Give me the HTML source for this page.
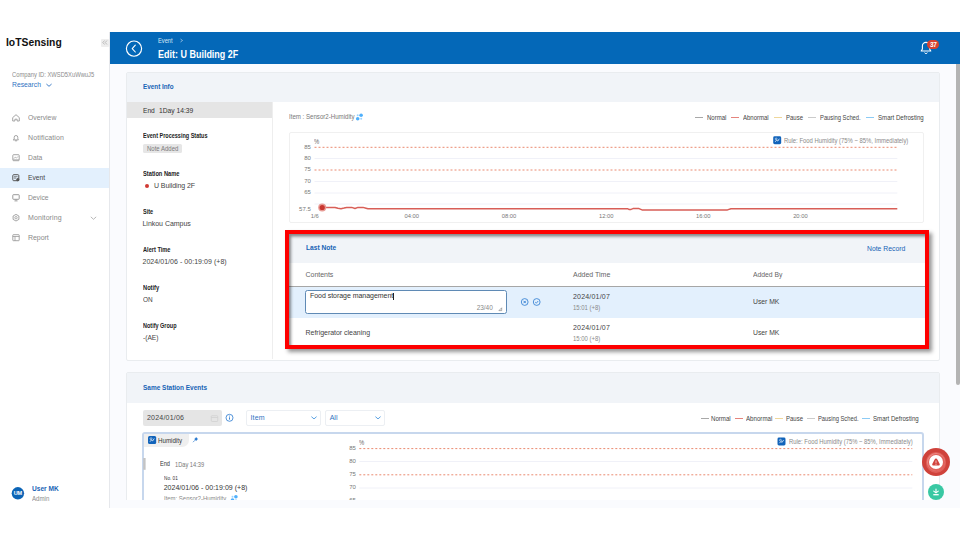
<!DOCTYPE html>
<html lang="en">
<head>
<meta charset="utf-8">
<title>IoTSensing - Edit: U Building 2F</title>
<style>
html,body{margin:0;padding:0;background:#fff;}
body{width:960px;height:540px;position:relative;overflow:hidden;font-family:"Liberation Sans",sans-serif;}
.b{position:absolute;display:block;}
.t{position:absolute;white-space:nowrap;display:block;transform-origin:0 50%;}
</style>
</head>
<body>
<div class="b" style="left:110px;top:64px;width:850px;height:443.5px;background:#fafbfe"></div>
<div class="b" style="left:109.3px;top:32px;width:0.9px;height:475.5px;background:#e6e8ec"></div>
<div class="b" style="left:110px;top:32px;width:850px;height:32px;background:#0468b8"></div>
<div class="b" style="left:955.6px;top:64px;width:4.4px;height:321px;background:#b4b4b4;border-radius:0 0 2px 2px"></div>
<span class="t" style="left:6px;top:34px;font-size:11px;line-height:16px;color:#111;font-weight:700;transform:scaleX(0.9396);">IoTSensing</span>
<div class="b" style="left:101px;top:38.5px;width:7.5px;height:8px;background:#eeeeee;border-radius:1px"></div>
<svg class="b" style="left:102px;top:40px" width="6" height="5" viewBox="0 0 6 5"><g transform="translate(0 0)"><path d="M2.6 .5 L.8 2.5 L2.6 4.5 M5 .5 L3.2 2.5 L5 4.5" fill="none" stroke="#9a9a9a" stroke-width=".6"/></g></svg>
<span class="t" style="left:12px;top:70px;font-size:6.5px;line-height:10px;color:#8c8c8c;transform:scaleX(0.8924);">Company ID: XWSD5XuWwuJ5</span>
<span class="t" style="left:12px;top:80px;font-size:7px;line-height:10px;color:#2f73c2;transform:scaleX(0.968);">Research</span>
<svg class="b" style="left:46px;top:83px" width="6" height="5" viewBox="0 0 6 5"><g transform="translate(0 0.4)"><path d="M.7 .9 L3 2.9 L5.3 .9" fill="none" stroke="#2f73c2" stroke-width=".9" stroke-linecap="round"/></g></svg>
<div class="b" style="left:0px;top:168px;width:109.3px;height:19.6px;background:#e3f0fd"></div>
<span class="t" style="left:28px;top:113px;font-size:7px;line-height:10px;color:#8a8a8a;transform:scaleX(0.9701);">Overview</span>
<svg class="b" style="left:12px;top:113px" width="8" height="9" viewBox="0 0 8 9"><g transform="translate(0 0.7)"><path d="M.7 7.3 V3.9 L4 1 L7.3 3.9 V7.3 H5.1 V5.5 H2.9 V7.3 Z" fill="none" stroke="#8f8f8f" stroke-width=".8" stroke-linejoin="round"/></g></svg>
<span class="t" style="left:28px;top:133px;font-size:7px;line-height:10px;color:#8a8a8a;letter-spacing:0.114px;">Notification</span>
<svg class="b" style="left:12px;top:133px" width="8" height="9" viewBox="0 0 8 9"><g transform="translate(0 0.7)"><path d="M1.6 6.2 H6.4 L5.8 5.2 V3.6 A1.8 1.8 0 0 0 2.2 3.6 V5.2 Z M3.3 7.1 H4.7" fill="none" stroke="#8f8f8f" stroke-width=".8" stroke-linejoin="round" stroke-linecap="round"/></g></svg>
<span class="t" style="left:28px;top:153px;font-size:7px;line-height:10px;color:#8a8a8a;transform:scaleX(0.9671);">Data</span>
<svg class="b" style="left:12px;top:153px" width="8" height="9" viewBox="0 0 8 9"><g transform="translate(0 0.7)"><rect x=".8" y="1" width="6.4" height="6" rx=".8" fill="none" stroke="#8f8f8f" stroke-width=".8"/><path d="M1.8 5 L3.2 3.4 L4.4 4.4 L6.2 2.6 M1 6 H7" fill="none" stroke="#8f8f8f" stroke-width=".6"/></g></svg>
<span class="t" style="left:28px;top:173px;font-size:7px;line-height:10px;color:#444;transform:scaleX(0.9497);">Event</span>
<svg class="b" style="left:12px;top:173px" width="8" height="9" viewBox="0 0 8 9"><g transform="translate(0 0.7)"><rect x=".8" y="1" width="6" height="6" rx=".9" fill="none" stroke="#555" stroke-width="1"/><path d="M2 3 H5.6 M2 4.4 H4" stroke="#555" stroke-width=".7"/><circle cx="5.8" cy="6" r="1.6" fill="#555"/></g></svg>
<span class="t" style="left:28px;top:193px;font-size:7px;line-height:10px;color:#8a8a8a;transform:scaleX(0.9628);">Device</span>
<svg class="b" style="left:12px;top:193px" width="8" height="9" viewBox="0 0 8 9"><g transform="translate(0 0.7)"><rect x=".8" y="1" width="6.4" height="4.6" rx=".6" fill="none" stroke="#8f8f8f" stroke-width=".9"/><path d="M2.4 7.2 H5.6 M4 5.8 V7" stroke="#8f8f8f" stroke-width=".8"/></g></svg>
<span class="t" style="left:28px;top:213px;font-size:7px;line-height:10px;color:#8a8a8a;letter-spacing:0.102px;">Monitoring</span>
<svg class="b" style="left:12px;top:213px" width="8" height="9" viewBox="0 0 8 9"><g transform="translate(0 0.7)"><path d="M4 .7 L6.9 2.3 V5.7 L4 7.3 L1.1 5.7 V2.3 Z" fill="none" stroke="#8f8f8f" stroke-width=".8" stroke-linejoin="round"/><circle cx="4" cy="4" r="1.2" fill="none" stroke="#8f8f8f" stroke-width=".7"/></g></svg>
<span class="t" style="left:28px;top:233px;font-size:7px;line-height:10px;color:#8a8a8a;letter-spacing:-0.052px;">Report</span>
<svg class="b" style="left:12px;top:233px" width="8" height="9" viewBox="0 0 8 9"><g transform="translate(0 0.7)"><rect x=".8" y="1" width="6.4" height="6" rx=".6" fill="none" stroke="#8f8f8f" stroke-width=".8"/><path d="M.8 2.8 H7.2 M3 2.8 V7" stroke="#8f8f8f" stroke-width=".7"/></g></svg>
<svg class="b" style="left:90px;top:216px" width="7" height="5" viewBox="0 0 7 5"><g transform="translate(0.5 0.3)"><path d="M.6 .8 L3 3 L5.4 .8" fill="none" stroke="#9a9a9a" stroke-width=".7" stroke-linecap="round"/></g></svg>
<svg class="b" style="left:11px;top:486px" width="14" height="14" viewBox="0 0 14 14"><g transform="translate(0 0)"><circle cx="6.9" cy="7.3" r="6.2" fill="#0b64b6"/></g></svg>
<span class="t" style="left:13.7px;top:489px;font-size:5.5px;line-height:8px;color:#fff;font-weight:700;letter-spacing:-0.077px;">UM</span>
<span class="t" style="left:32px;top:484px;font-size:7px;line-height:10px;color:#1763b5;font-weight:700;transform:scaleX(0.9402);">User MK</span>
<span class="t" style="left:32px;top:494px;font-size:6.5px;line-height:10px;color:#8c8c8c;transform:scaleX(0.939);">Admin</span>
<svg class="b" style="left:125px;top:39px" width="18" height="19" viewBox="0 0 18 19"><g transform="translate(0 0.6)"><circle cx="9" cy="9" r="7.6" fill="none" stroke="#fff" stroke-width="1.15"/><path d="M10.3 5.6 L7.2 9 L10.3 12.4" fill="none" stroke="#fff" stroke-width="1.1" stroke-linecap="round" stroke-linejoin="round"/></g></svg>
<span class="t" style="left:158px;top:36px;font-size:6.5px;line-height:10px;color:#d7e6f5;transform:scaleX(0.8784);">Event</span>
<svg class="b" style="left:179px;top:38px" width="5" height="5" viewBox="0 0 5 5"><g transform="translate(0.5 0.5)"><path d="M1 .5 L3 2 L1 3.5" fill="none" stroke="#d7e6f5" stroke-width=".6"/></g></svg>
<span class="t" style="left:158px;top:48px;font-size:10px;line-height:14px;color:#fff;font-weight:700;transform:scaleX(0.8978);">Edit: U Building 2F</span>
<svg class="b" style="left:919px;top:40px" width="14" height="15" viewBox="0 0 14 15"><g transform="translate(0 0)"><path d="M2.2 11 H11.8 L10.6 9 V6 A3.6 3.6 0 0 0 3.4 6 V9 Z" fill="none" stroke="#fff" stroke-width="1.1" stroke-linejoin="round"/><path d="M5.6 12.6 A1.5 1.5 0 0 0 8.4 12.6" fill="none" stroke="#fff" stroke-width="1"/></g></svg>
<div class="b" style="left:927.2px;top:40px;width:12px;height:8.9px;background:#d8412f;border-radius:4.4px"></div>
<span class="t" style="left:929.88px;top:40px;font-size:6.5px;line-height:10px;color:#fff;font-weight:700;letter-spacing:-0.3px;">37</span>
<div class="b" style="left:126px;top:72px;width:814px;height:288.5px;background:#fff;border:1px solid #e9ecef;border-radius:2px;box-sizing:border-box"></div>
<div class="b" style="left:127px;top:72.8px;width:811.6px;height:29.2px;background:#f1f4f8"></div>
<span class="t" style="left:142.7px;top:82px;font-size:7px;line-height:10px;color:#1763b5;font-weight:700;transform:scaleX(0.9044);">Event Info</span>
<div class="b" style="left:127px;top:102px;width:145.5px;height:16px;background:#e5e5e5"></div>
<div class="b" style="left:272.2px;top:102px;width:0.8px;height:257.4px;background:#eeeeee"></div>
<span class="t" style="left:142.5px;top:106px;font-size:7px;line-height:10px;color:#333;transform:scaleX(0.9474);">End</span>
<span class="t" style="left:158.7px;top:106px;font-size:7px;line-height:10px;color:#333;transform:scaleX(0.958);">1Day 14:39</span>
<span class="t" style="left:142.5px;top:131px;font-size:6.5px;line-height:10px;color:#222;font-weight:700;transform:scaleX(0.8462);">Event Processing Status</span>
<div class="b" style="left:142.5px;top:143.8px;width:39.5px;height:9.4px;background:#e6e6e6;border-radius:1.5px"></div>
<span class="t" style="left:146.7px;top:144px;font-size:6.5px;line-height:10px;color:#7a7a7a;transform:scaleX(0.9213);">Note Added</span>
<span class="t" style="left:142.5px;top:169px;font-size:6.5px;line-height:10px;color:#222;font-weight:700;transform:scaleX(0.8787);">Station Name</span>
<div class="b" style="left:145px;top:183.5px;width:4px;height:4px;background:#d03a34;border-radius:50%"></div>
<span class="t" style="left:154px;top:181px;font-size:7px;line-height:10px;color:#444;letter-spacing:-0.079px;">U Building 2F</span>
<span class="t" style="left:142.5px;top:207px;font-size:6.5px;line-height:10px;color:#222;font-weight:700;transform:scaleX(0.8556);">Site</span>
<span class="t" style="left:142.5px;top:219px;font-size:7px;line-height:10px;color:#444;letter-spacing:-0.026px;">Linkou Campus</span>
<span class="t" style="left:142.5px;top:245px;font-size:6.5px;line-height:10px;color:#222;font-weight:700;transform:scaleX(0.8683);">Alert Time</span>
<span class="t" style="left:142.5px;top:257px;font-size:7px;line-height:10px;color:#444;letter-spacing:0.043px;">2024/01/06 - 00:19:09 (+8)</span>
<span class="t" style="left:142.5px;top:283px;font-size:6.5px;line-height:10px;color:#222;font-weight:700;transform:scaleX(0.8797);">Notify</span>
<span class="t" style="left:142.5px;top:295px;font-size:7px;line-height:10px;color:#444;transform:scaleX(0.9238);">ON</span>
<span class="t" style="left:142.5px;top:321px;font-size:6.5px;line-height:10px;color:#222;font-weight:700;transform:scaleX(0.8434);">Notify Group</span>
<span class="t" style="left:142.5px;top:333px;font-size:7px;line-height:10px;color:#444;transform:scaleX(0.9491);">-(AE)</span>
<span class="t" style="left:289px;top:112px;font-size:6.5px;line-height:10px;color:#777;transform:scaleX(0.9395);">Item : Sensor2-Humidity</span>
<svg class="b" style="left:355px;top:113px" width="9" height="8" viewBox="0 0 9 8"><g transform="translate(0.6 0.2)"><circle cx="2.1" cy="5.5" r="1.8" fill="#4fb0fc"/><circle cx="5.5" cy="2.1" r="1.8" fill="#4fb0fc"/><circle cx="2.1" cy="2.1" r="1" fill="#9fd3fd"/><circle cx="5.6" cy="5.6" r="1" fill="#9fd3fd"/></g></svg>
<div class="b" style="left:695px;top:116.89999999999999px;width:7.5px;height:1px;background:#a8a8a8"></div>
<span class="t" style="left:706.7px;top:113px;font-size:6.5px;line-height:10px;color:#444;transform:scaleX(0.9213);">Normal</span>
<div class="b" style="left:731.3px;top:116.89999999999999px;width:7.5px;height:1px;background:#e5847d"></div>
<span class="t" style="left:743.3px;top:113px;font-size:6.5px;line-height:10px;color:#444;transform:scaleX(0.9238);">Abnormal</span>
<div class="b" style="left:774.3px;top:116.89999999999999px;width:7.5px;height:1px;background:#efd79b"></div>
<span class="t" style="left:786px;top:113px;font-size:6.5px;line-height:10px;color:#444;transform:scaleX(0.9224);">Pause</span>
<div class="b" style="left:808.3px;top:116.89999999999999px;width:7.5px;height:1px;background:#cbcbcb"></div>
<span class="t" style="left:820px;top:113px;font-size:6.5px;line-height:10px;color:#444;transform:scaleX(0.8939);">Pausing Sched.</span>
<div class="b" style="left:866.3px;top:116.89999999999999px;width:7.5px;height:1px;background:#8ccbf5"></div>
<span class="t" style="left:878px;top:113px;font-size:6.5px;line-height:10px;color:#444;transform:scaleX(0.9371);">Smart Defrosting</span>
<div class="b" style="left:289px;top:132px;width:635.2px;height:91px;background:#fff;border:1px solid #f0f0f0;border-radius:2px;box-sizing:border-box"></div>
<svg class="b" style="left:289px;top:132px" width="635" height="91" viewBox="0 0 635 91"><g transform="translate(-289 -132)"><path d="M314.5 158.5 H897.3" stroke="#eceef6" stroke-width=".8"/><path d="M314.5 181.5 H897.3" stroke="#eceef6" stroke-width=".8"/><path d="M314.5 193 H897.3" stroke="#eceef6" stroke-width=".8"/><path d="M314.5 204 H897.3" stroke="#eceef6" stroke-width=".8"/><path d="M314.5 147.3 H897.3" stroke="#ea8a70" stroke-width="1" stroke-dasharray="2 2"/><path d="M314.5 170 H897.3" stroke="#ea8a70" stroke-width="1" stroke-dasharray="2 2"/><path d="M322.2 207.5 L335 207.5 L338 208.2 L341 208.7 L344 208.1 L346.7 207.4 L351.7 207.4 L355 208.5 L358 207.4 L363 207.4 L366 208.2 L368 208.7 L627.5 208.7 L629.3 209.6 L631 209.4 L633 208.6 L639 208.6 L642 209.9 L727.5 209.9 L731 208.7 L897.3 208.7" fill="none" stroke="#d85e57" stroke-width="1.5" stroke-linejoin="round"/><circle cx="322.2" cy="207.5" r="4" fill="#e79a94"/><circle cx="322.2" cy="207.5" r="2.6" fill="#c8352e"/></g></svg>
<span class="t" style="left:314.4px;top:137px;font-size:6.5px;line-height:10px;color:#6a6a6a;transform:scaleX(0.8997);">%</span>
<span class="t" style="left:304.13px;top:143px;font-size:6px;line-height:9px;color:#777;">85</span>
<span class="t" style="left:304.13px;top:154px;font-size:6px;line-height:9px;color:#777;">80</span>
<span class="t" style="left:304.13px;top:165px;font-size:6px;line-height:9px;color:#777;">75</span>
<span class="t" style="left:304.13px;top:177px;font-size:6px;line-height:9px;color:#777;">70</span>
<span class="t" style="left:304.13px;top:188px;font-size:6px;line-height:9px;color:#777;">65</span>
<span class="t" style="left:299.12px;top:205px;font-size:6px;line-height:9px;color:#777;">57.5</span>
<span class="t" style="left:310.77px;top:212px;font-size:5.8px;line-height:9px;color:#777;">1/6</span>
<span class="t" style="left:404.44px;top:212px;font-size:5.8px;line-height:9px;color:#777;">04:00</span>
<span class="t" style="left:501.74px;top:212px;font-size:5.8px;line-height:9px;color:#777;">08:00</span>
<span class="t" style="left:598.94px;top:212px;font-size:5.8px;line-height:9px;color:#777;">12:00</span>
<span class="t" style="left:696.04px;top:212px;font-size:5.8px;line-height:9px;color:#777;">16:00</span>
<span class="t" style="left:793.14px;top:212px;font-size:5.8px;line-height:9px;color:#777;">20:00</span>
<svg class="b" style="left:773px;top:136px" width="9" height="9" viewBox="0 0 9 9"><g transform="translate(0 0) scale(1.05 1.05)"><rect x=".2" y=".2" width="7.6" height="7.6" rx="1.4" fill="#1163ba"/><path d="M2 5.6 L3.4 4 L4.6 4.8 L6 2.6" fill="none" stroke="#fff" stroke-width=".7"/><circle cx="3" cy="2.8" r=".9" fill="none" stroke="#fff" stroke-width=".5"/></g></svg>
<span class="t" style="left:784px;top:136px;font-size:6.5px;line-height:10px;color:#8a8a8a;transform:scaleX(0.9066);">Rule: Food Humidity (75% ~ 85%, Immediately)</span>
<div class="b" style="left:285px;top:230px;width:644px;height:119px;border:4px solid #fe0000;box-sizing:border-box;box-shadow:2.5px 2.5px 4px rgba(0,0,0,.42);background:#fff"></div>
<div class="b" style="left:289px;top:234px;width:636px;height:29px;background:#f1f4f8"></div>
<div class="b" style="left:289px;top:286px;width:636px;height:1px;background:#a6a6a6"></div>
<div class="b" style="left:289px;top:287px;width:636px;height:30.6px;background:#e3f0fd"></div>
<div class="b" style="left:289px;top:234px;width:636px;height:111px;box-shadow:inset 2px 2.5px 3px rgba(0,0,0,.45)"></div>
<span class="t" style="left:305.5px;top:243px;font-size:7px;line-height:10px;color:#1763b5;font-weight:700;transform:scaleX(0.9469);">Last Note</span>
<span class="t" style="left:866.7px;top:244px;font-size:7px;line-height:10px;color:#1763b5;transform:scaleX(0.9746);">Note Record</span>
<span class="t" style="left:305.5px;top:270px;font-size:7px;line-height:10px;color:#666;letter-spacing:-0.027px;">Contents</span>
<span class="t" style="left:573px;top:270px;font-size:7px;line-height:10px;color:#666;letter-spacing:-0.006px;">Added Time</span>
<span class="t" style="left:752.8px;top:270px;font-size:7px;line-height:10px;color:#666;transform:scaleX(0.9685);">Added By</span>
<div class="b" style="left:305.3px;top:290.3px;width:201.7px;height:23.6px;background:#fff;border:1px solid #5f8ab5;border-radius:2.5px;box-sizing:border-box"></div>
<span class="t" style="left:310px;top:291px;font-size:7px;line-height:10px;color:#333;letter-spacing:-0.037px;">Food storage management</span>
<div class="b" style="left:393.2px;top:292.6px;width:0.7px;height:7px;background:#222"></div>
<span class="t" style="left:476.7px;top:303px;font-size:6.5px;line-height:10px;color:#8a8a8a;letter-spacing:-0.053px;">23/40</span>
<svg class="b" style="left:498px;top:307px" width="5" height="5" viewBox="0 0 5 5"><g transform="translate(0.3 0.2)"><path d="M.6 3.4 L3.4 .6 V3.4 Z" fill="none" stroke="#777" stroke-width=".6"/></g></svg>
<svg class="b" style="left:520px;top:297px" width="10" height="10" viewBox="0 0 10 10"><g transform="translate(0.2 0.5)"><circle cx="4.5" cy="4.5" r="3.4" fill="none" stroke="#2a7ad0" stroke-width=".8"/><path d="M3.3 3.3 L5.7 5.7 M5.7 3.3 L3.3 5.7" stroke="#2a7ad0" stroke-width=".9"/></g></svg>
<svg class="b" style="left:532px;top:297px" width="10" height="10" viewBox="0 0 10 10"><g transform="translate(0.2 0.5)"><circle cx="4.5" cy="4.5" r="3.4" fill="none" stroke="#2a7ad0" stroke-width=".8"/><path d="M3 4.6 L4.1 5.7 L6 3.5" fill="none" stroke="#2a7ad0" stroke-width=".8"/></g></svg>
<span class="t" style="left:573px;top:292px;font-size:7px;line-height:10px;color:#444;letter-spacing:0.196px;">2024/01/07</span>
<span class="t" style="left:573px;top:303px;font-size:6.5px;line-height:10px;color:#8a8a8a;transform:scaleX(0.9157);">15:01 (+8)</span>
<span class="t" style="left:752.8px;top:297px;font-size:7px;line-height:10px;color:#444;transform:scaleX(0.9697);">User MK</span>
<span class="t" style="left:305.5px;top:328px;font-size:7px;line-height:10px;color:#444;letter-spacing:-0.023px;">Refrigerator cleaning</span>
<span class="t" style="left:573px;top:323px;font-size:7px;line-height:10px;color:#444;letter-spacing:0.196px;">2024/01/07</span>
<span class="t" style="left:573px;top:334px;font-size:6.5px;line-height:10px;color:#8a8a8a;transform:scaleX(0.9157);">15:00 (+8)</span>
<span class="t" style="left:752.8px;top:328px;font-size:7px;line-height:10px;color:#444;transform:scaleX(0.9697);">User MK</span>
<div class="b" style="left:110px;top:370px;width:840px;height:129.8px;overflow:hidden"><div class="b" style="left:-110px;top:-370px;width:960px;height:540px">
<div class="b" style="left:126px;top:372px;width:814px;height:200px;background:#fff;border:1px solid #e9ecef;border-radius:2px;box-sizing:border-box"></div>
<div class="b" style="left:127px;top:373px;width:812px;height:29.7px;background:#f1f4f8"></div>
<span class="t" style="left:142.5px;top:383px;font-size:7px;line-height:10px;color:#1763b5;font-weight:700;transform:scaleX(0.9242);">Same Station Events</span>
<div class="b" style="left:142.7px;top:410.2px;width:79.5px;height:15.6px;background:#e5e5e5;border-radius:2px"></div>
<span class="t" style="left:147px;top:413px;font-size:7px;line-height:10px;color:#444;letter-spacing:0.216px;">2024/01/06</span>
<svg class="b" style="left:210px;top:414px" width="9" height="9" viewBox="0 0 9 9"><g transform="translate(0.5 0.5)"><rect x=".8" y="1.2" width="6.4" height="5.8" rx=".8" fill="none" stroke="#cfcfcf" stroke-width=".7"/><path d="M.8 3 H7.2" stroke="#cfcfcf" stroke-width=".7"/></g></svg>
<svg class="b" style="left:225px;top:413px" width="9" height="10" viewBox="0 0 9 10"><g transform="translate(0 0.3)"><circle cx="4.5" cy="4.5" r="3.5" fill="none" stroke="#2a7ad0" stroke-width=".8"/><path d="M4.5 4 V6.3" stroke="#2a7ad0" stroke-width=".9"/><circle cx="4.5" cy="2.8" r=".5" fill="#2a7ad0"/></g></svg>
<div class="b" style="left:246.3px;top:410.3px;width:74.5px;height:15.5px;background:#fff;border:1px solid #eceff3;border-radius:2px;box-sizing:border-box"></div>
<span class="t" style="left:250.5px;top:413px;font-size:7px;line-height:10px;color:#2f73c2;letter-spacing:0.146px;">Item</span>
<svg class="b" style="left:311px;top:416px" width="6" height="4" viewBox="0 0 6 4"><g transform="translate(0 0)"><path d="M.7 .9 L3 2.9 L5.3 .9" fill="none" stroke="#4a97e0" stroke-width=".9" stroke-linecap="round"/></g></svg>
<div class="b" style="left:325.3px;top:410.3px;width:59.4px;height:15.5px;background:#fff;border:1px solid #eceff3;border-radius:2px;box-sizing:border-box"></div>
<span class="t" style="left:329.7px;top:413px;font-size:7px;line-height:10px;color:#2f73c2;letter-spacing:0.007px;">All</span>
<svg class="b" style="left:375px;top:416px" width="6" height="4" viewBox="0 0 6 4"><g transform="translate(0 0)"><path d="M.7 .9 L3 2.9 L5.3 .9" fill="none" stroke="#4a97e0" stroke-width=".9" stroke-linecap="round"/></g></svg>
<div class="b" style="left:701px;top:418px;width:7.5px;height:1px;background:#a8a8a8"></div>
<span class="t" style="left:711.3px;top:414px;font-size:6.5px;line-height:10px;color:#444;transform:scaleX(0.9404);">Normal</span>
<div class="b" style="left:735.3px;top:418px;width:7.5px;height:1px;background:#e5847d"></div>
<span class="t" style="left:745.7px;top:414px;font-size:6.5px;line-height:10px;color:#444;transform:scaleX(0.9454);">Abnormal</span>
<div class="b" style="left:775.3px;top:418px;width:7.5px;height:1px;background:#efd79b"></div>
<span class="t" style="left:786px;top:414px;font-size:6.5px;line-height:10px;color:#444;transform:scaleX(0.9224);">Pause</span>
<div class="b" style="left:807.3px;top:418px;width:7.5px;height:1px;background:#cbcbcb"></div>
<span class="t" style="left:817.5px;top:414px;font-size:6.5px;line-height:10px;color:#444;transform:scaleX(0.8895);">Pausing Sched.</span>
<div class="b" style="left:862.3px;top:418px;width:7.5px;height:1px;background:#8ccbf5"></div>
<span class="t" style="left:873px;top:414px;font-size:6.5px;line-height:10px;color:#444;transform:scaleX(0.9371);">Smart Defrosting</span>
<div class="b" style="left:142px;top:432px;width:782px;height:120px;background:#fff;border:2px solid #c7d7ed;border-radius:3px;box-sizing:border-box"></div>
<div class="b" style="left:144px;top:433.8px;width:44.7px;height:12.9px;background:#efefef;border-radius:0 0 7px 0"></div>
<svg class="b" style="left:147px;top:435px" width="10" height="10" viewBox="0 0 10 10"><g transform="translate(0.8 0.7) scale(1.075 1.075)"><rect x=".2" y=".2" width="7.6" height="7.6" rx="1.4" fill="#1163ba"/><path d="M2 5.6 L3.4 4 L4.6 4.8 L6 2.6" fill="none" stroke="#fff" stroke-width=".7"/><circle cx="3" cy="2.8" r=".9" fill="none" stroke="#fff" stroke-width=".5"/></g></svg>
<span class="t" style="left:158px;top:436px;font-size:6.5px;line-height:10px;color:#333;transform:scaleX(0.9492);">Humidity</span>
<svg class="b" style="left:192px;top:436px" width="7" height="8" viewBox="0 0 7 8"><g transform="translate(0 0.2)"><path d="M4 .8 L6.2 3 L5.2 3.4 L4.2 4.8 L2.2 2.8 L3.6 1.8 Z" fill="#2a7ad0"/><path d="M3 4 L1 6" stroke="#2a7ad0" stroke-width=".7"/></g></svg>
<svg class="b" style="left:142px;top:457px" width="5" height="14" viewBox="0 0 5 14"><g transform="translate(0 0)"><rect x="1.2" y="1" width="2.4" height="11.8" fill="#c4c4c4"/></g></svg>
<span class="t" style="left:160px;top:459px;font-size:6.5px;line-height:10px;color:#333;transform:scaleX(0.8646);">End</span>
<span class="t" style="left:174.7px;top:460px;font-size:6.5px;line-height:10px;color:#777;transform:scaleX(0.8753);">1Day 14:39</span>
<span class="t" style="left:163.7px;top:474px;font-size:5.5px;line-height:8px;color:#333;transform:scaleX(0.8516);">No. 01</span>
<span class="t" style="left:163.7px;top:483px;font-size:7px;line-height:10px;color:#333;letter-spacing:0.027px;">2024/01/06 - 00:19:09 (+8)</span>
<span class="t" style="left:163.7px;top:494px;font-size:6.5px;line-height:10px;color:#8a8a8a;transform:scaleX(0.9144);">Item: Sensor2-Humidity</span>
<svg class="b" style="left:230px;top:494px" width="9" height="9" viewBox="0 0 9 9"><g transform="translate(0.4 0.6)"><circle cx="2.1" cy="5.5" r="1.8" fill="#4fb0fc"/><circle cx="5.5" cy="2.1" r="1.8" fill="#4fb0fc"/><circle cx="2.1" cy="2.1" r="1" fill="#9fd3fd"/><circle cx="5.6" cy="5.6" r="1" fill="#9fd3fd"/></g></svg>
<svg class="b" style="left:340px;top:433px" width="583" height="80" viewBox="0 0 583 80"><g transform="translate(-340 -433)"><path d="M359.3 461.5 H912.3" stroke="#eceef6" stroke-width=".8"/><path d="M359.3 488 H912.3" stroke="#eceef6" stroke-width=".8"/><path d="M359.3 448.6 H912.3" stroke="#ea8a70" stroke-width="1" stroke-dasharray="2 2"/><path d="M359.3 474.8 H912.3" stroke="#ea8a70" stroke-width="1" stroke-dasharray="2 2"/></g></svg>
<span class="t" style="left:359.4px;top:438px;font-size:6.5px;line-height:10px;color:#6a6a6a;transform:scaleX(0.8997);">%</span>
<span class="t" style="left:349.13px;top:444px;font-size:6px;line-height:9px;color:#777;">85</span>
<span class="t" style="left:349.13px;top:457px;font-size:6px;line-height:9px;color:#777;">80</span>
<span class="t" style="left:349.13px;top:470px;font-size:6px;line-height:9px;color:#777;">75</span>
<span class="t" style="left:349.13px;top:483px;font-size:6px;line-height:9px;color:#777;">70</span>
<span class="t" style="left:349.13px;top:496px;font-size:6px;line-height:9px;color:#777;">65</span>
<svg class="b" style="left:777px;top:437px" width="9" height="9" viewBox="0 0 9 9"><g transform="translate(0.3 0.3) scale(1.05 1.05)"><rect x=".2" y=".2" width="7.6" height="7.6" rx="1.4" fill="#1163ba"/><path d="M2 5.6 L3.4 4 L4.6 4.8 L6 2.6" fill="none" stroke="#fff" stroke-width=".7"/><circle cx="3" cy="2.8" r=".9" fill="none" stroke="#fff" stroke-width=".5"/></g></svg>
<span class="t" style="left:788.7px;top:437px;font-size:6.5px;line-height:10px;color:#8a8a8a;transform:scaleX(0.9015);">Rule: Food Humidity (75% ~ 85%, Immediately)</span>
</div></div>
<div class="b" style="left:922px;top:448.2px;width:28px;height:28px;background:#cf423b;border-radius:50%"></div>
<div class="b" style="left:925.6px;top:451.8px;width:20.8px;height:20.8px;background:#e0605a;border-radius:50%"></div>
<div class="b" style="left:926.9px;top:453.1px;width:18.2px;height:18.2px;background:#ec8984;border-radius:50%"></div>
<div class="b" style="left:927.5px;top:453.7px;width:17px;height:17px;background:#e0605a;border-radius:50%"></div>
<div class="b" style="left:928.7px;top:454.9px;width:14.6px;height:14.6px;background:#fff;border-radius:50%"></div>
<svg class="b" style="left:931px;top:457px" width="10" height="11" viewBox="0 0 10 11"><g transform="translate(0 0.3)"><path d="M5 1.3 C5.7 1.3 6.1 1.7 6.5 2.5 L8.6 6.4 C9.1 7.5 8.6 8.3 7.5 8.3 H2.5 C1.4 8.3 .9 7.5 1.4 6.4 L3.5 2.5 C3.9 1.7 4.3 1.3 5 1.3 Z" fill="#d2433d"/><path d="M5 3.6 V5.6" stroke="#f6c9c6" stroke-width=".9" stroke-linecap="round"/><circle cx="5" cy="6.9" r=".55" fill="#f6c9c6"/></g></svg>
<div class="b" style="left:928px;top:484px;width:16px;height:16px;background:#39c8a3;border-radius:50%"></div>
<svg class="b" style="left:931px;top:487px" width="10" height="10" viewBox="0 0 10 10"><g transform="translate(0.5 0.5)"><path d="M4.5 1.6 V5.2 M2.2 3.6 L4.5 5.4 L6.8 3.6" fill="none" stroke="#fff" stroke-width="1.1" stroke-linecap="round" stroke-linejoin="round"/><path d="M1.8 7.2 H7.2" stroke="#fff" stroke-width="1.3"/></g></svg>
</body>
</html>
